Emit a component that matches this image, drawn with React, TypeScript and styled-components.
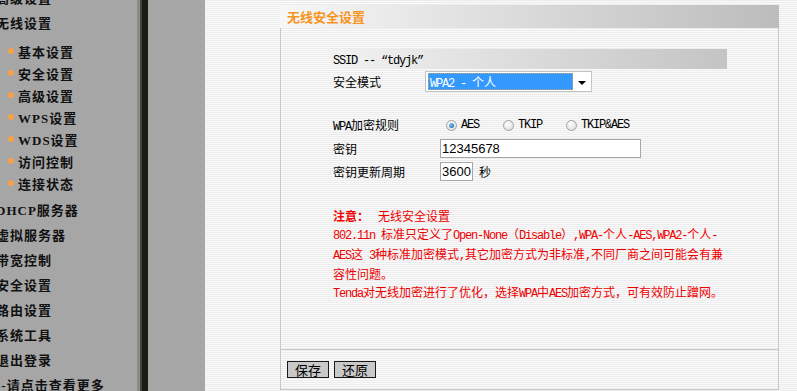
import * as React from "react";
import styled, { createGlobalStyle } from "styled-components";

const GlobalStyle = createGlobalStyle`
  html, body {
    margin: 0;
    padding: 0;
    overflow: hidden;
  }
  body {
    font-family: "Noto Sans CJK SC", "DejaVu Sans", sans-serif;
    font-size: 12px;
    color: #000;
  }
`;

const SPage = styled.div`
  display: flex;
  width: 797px;
  height: 391px;
  overflow: hidden;
`;

const SSidebar = styled.nav`
  width: 137px;
  flex: none;
  background: #a6a6a6;
  overflow: hidden;
`;

const SMenu = styled.ul`
  list-style: none;
  margin: -14.5px 0 0 -4px;
  padding: 0;
  display: flex;
  flex-direction: column;
  font-family: "Liberation Serif", "Noto Sans CJK SC", serif;
  font-weight: 700;
  font-size: 13px;
  letter-spacing: 1px;
  color: #111;
`;

const SMainItem = styled.li`
  height: 25px;
  line-height: 25px;
  white-space: nowrap;
`;

const SSubMenu = styled.ul`
  list-style: none;
  margin: 4.5px 0 3.5px;
  padding: 0;
`;

const SSubItem = styled.li`
  display: flex;
  align-items: center;
  gap: 4px;
  height: 22px;
  padding-left: 12px;
  white-space: nowrap;
`;

const SBullet = styled.span`
  width: 6px;
  height: 6px;
  border-radius: 50%;
  background: #f9a044;
  flex: none;
`;

const SDivider = styled.div`
  width: 11px;
  flex: none;
  background: linear-gradient(
    to right,
    #8b8b8b 0 3px,
    #47433f 3px 5px,
    #1d1914 5px 11px
  );
`;

const SGutter = styled.div`
  width: 57px;
  flex: none;
  background: #a6a6a6;
`;

const SMain = styled.main`
  flex: 1;
  padding: 5px 0 0 75px;
  background: repeating-linear-gradient(
    to bottom,
    #ececec 0 1px,
    #fafafa 1px 2px
  );
  overflow: hidden;
`;

const SPanel = styled.section`
  width: 499px;
  display: flex;
  flex-direction: column;
`;

const SPanelTitle = styled.h2`
  margin: 0;
  height: 23px;
  line-height: 23px;
  padding-left: 7px;
  background: linear-gradient(to right, #f7f7f7, #bcbcbc);
  color: #f7941d;
  font-size: 13px;
  font-weight: 700;
`;

const SPanelBody = styled.div`
  height: 321px;
  box-sizing: border-box;
  padding: 21px 0 0 52px;
  border-left: 1px solid #c8c8c8;
  border-right: 1px solid #c8c8c8;
`;

const SSsidBar = styled.div`
  width: 397px;
  height: 20px;
  line-height: 20px;
  margin-left: -3px;
  padding-left: 3px;
  box-sizing: border-box;
  background: linear-gradient(to right, #f2f2f2, #c4c4c4);
`;

const SRow = styled.div<{ $top?: number; $height?: number }>`
  display: flex;
  align-items: center;
  height: ${(p) => p.$height ?? 23}px;
  margin-top: ${(p) => p.$top ?? 0}px;
  white-space: nowrap;
`;

const SLabel = styled.span<{ $width: number }>`
  width: ${(p) => p.$width}px;
  flex: none;
`;

const SSelect = styled.div`
  width: 167px;
  height: 21px;
  box-sizing: border-box;
  border: 1px solid #c4c4c4;
  background: #fff;
  display: flex;
  align-items: center;
  padding: 0 0 0 2px;
`;

const SSelected = styled.span`
  width: 145px;
  height: 17px;
  line-height: 15px;
  box-sizing: border-box;
  padding-left: 1px;
  background: #3399ff;
  border: 1px dotted #cfa765;
  color: #fff;
`;

const SArrow = styled.span`
  flex: 1;
  display: flex;
  justify-content: center;
  &::after {
    content: "";
    border-left: 4px solid transparent;
    border-right: 4px solid transparent;
    border-top: 4px solid #000;
    margin-top: 2px;
  }
`;

const SOption = styled.label`
  display: flex;
  align-items: center;
  gap: 4px;
  margin-right: 18px;
`;

const SRadio = styled.span<{ $checked?: boolean }>`
  width: 11px;
  height: 11px;
  margin-left: 6px;
  box-sizing: border-box;
  border-radius: 50%;
  border: 1px solid #a2a2a2;
  background: radial-gradient(circle at 40% 35%, #ffffff, #d6d6d6);
  display: flex;
  align-items: center;
  justify-content: center;
  &::after {
    content: "";
    display: ${(p) => (p.$checked ? "block" : "none")};
    width: 5px;
    height: 5px;
    border-radius: 50%;
    background: radial-gradient(circle at 35% 35%, #7fc0f5, #1c5fa8);
  }
`;

const SInput = styled.input<{ $width: number }>`
  width: ${(p) => p.$width}px;
  height: 19px;
  box-sizing: border-box;
  margin: 0;
  padding: 0 1px;
  border: 1px solid #a6a6a6;
  background: #fff;
  font-family: "Liberation Sans", Arial, sans-serif;
  font-size: 13px;
  color: #000;
  outline: none;
`;

const SUnit = styled.span`
  margin-left: 6px;
`;

const SNotice = styled.div`
  margin-top: 24.5px;
  color: #ee0000;
  line-height: 18px;
  white-space: nowrap;
`;

const SNoticeHead = styled.strong`
  font-weight: 700;
  margin-right: 9px;
`;

const SPanelFooter = styled.div`
  display: flex;
  gap: 5px;
  height: 39px;
  box-sizing: content-box;
  padding: 11px 0 0 6px;
  box-sizing: border-box;
  height: 41px;
  border: 1px solid #c8c8c8;
`;

const SButton = styled.button`
  width: 42px;
  height: 17px;
  padding: 0;
  box-sizing: border-box;
  border: 1px solid #1a1a1a;
  background: #c9c9c9;
  font-family: "Noto Sans CJK SC", sans-serif;
  font-size: 13px;
  line-height: 15px;
  color: #000;
`;

const SLatin = styled.span`
  font-family: "Liberation Mono", "DejaVu Sans Mono", monospace;
  letter-spacing: -1.2px;
`;

// latin runs are set in a mono face at 6px per char, like the original bitmap font
const LATIN = /^[\x20-\x7e\u201c\u201d]+$/;
const mix = (text: string) =>
  text
    .split(/([\x20-\x7e\u201c\u201d]+)/)
    .filter(Boolean)
    .map((part, i) =>
      LATIN.test(part) ? (
        <SLatin key={i}>{part}</SLatin>
      ) : (
        <React.Fragment key={i}>{part}</React.Fragment>
      )
    );

const topMenu = ["高级设置", "无线设置"];
const subMenu = ["基本设置", "安全设置", "高级设置", "WPS设置", "WDS设置", "访问控制", "连接状态"];
const bottomMenu = ["DHCP服务器", "虚拟服务器", "带宽控制", "安全设置", "路由设置", "系统工具", "退出登录", "--请点击查看更多"];

const notice = [
  "802.11n 标准只定义了Open-None（Disable）,WPA-个人-AES,WPA2-个人-",
  "AES这 3种标准加密模式,其它加密方式为非标准,不同厂商之间可能会有兼",
  "容性问题。",
  "Tenda对无线加密进行了优化，选择WPA中AES加密方式，可有效防止蹭网。"
];

const ciphers = ["AES", "TKIP", "TKIP&AES"];

const App = () => (
  <SPage>
    <GlobalStyle />
    <SSidebar>
      <SMenu>
        {topMenu.map((item) => (
          <SMainItem key={item}>{item}</SMainItem>
        ))}
        <SSubMenu>
          {subMenu.map((item) => (
            <SSubItem key={item}>
              <SBullet />
              {item}
            </SSubItem>
          ))}
        </SSubMenu>
        {bottomMenu.map((item) => (
          <SMainItem key={item}>{item}</SMainItem>
        ))}
      </SMenu>
    </SSidebar>
    <SDivider />
    <SGutter />
    <SMain>
      <SPanel>
        <SPanelTitle>无线安全设置</SPanelTitle>
        <SPanelBody>
          <SSsidBar>{mix("SSID -- \u201ctdyjk\u201d")}</SSsidBar>
          <SRow $top={2} $height={21}>
            <SLabel $width={92}>安全模式</SLabel>
            <SSelect>
              <SSelected>{mix("WPA2 - 个人")}</SSelected>
              <SArrow />
            </SSelect>
          </SRow>
          <SRow $top={21.5}>
            <SLabel $width={107}>{mix("WPA加密规则")}</SLabel>
            {ciphers.map((c, i) => (
              <SOption key={c}>
                <SRadio $checked={i === 0} />
                {mix(c)}
              </SOption>
            ))}
          </SRow>
          <SRow>
            <SLabel $width={107}>密钥</SLabel>
            <SInput $width={201} defaultValue="12345678" readOnly />
          </SRow>
          <SRow>
            <SLabel $width={107}>密钥更新周期</SLabel>
            <SInput $width={33} defaultValue="3600" readOnly />
            <SUnit>秒</SUnit>
          </SRow>
          <SNotice>
            <div>
              <SNoticeHead>注意：</SNoticeHead>无线安全设置
            </div>
            {notice.map((line) => (
              <div key={line}>{mix(line)}</div>
            ))}
          </SNotice>
        </SPanelBody>
        <SPanelFooter>
          <SButton>保存</SButton>
          <SButton>还原</SButton>
        </SPanelFooter>
      </SPanel>
    </SMain>
  </SPage>
);

export default App;
